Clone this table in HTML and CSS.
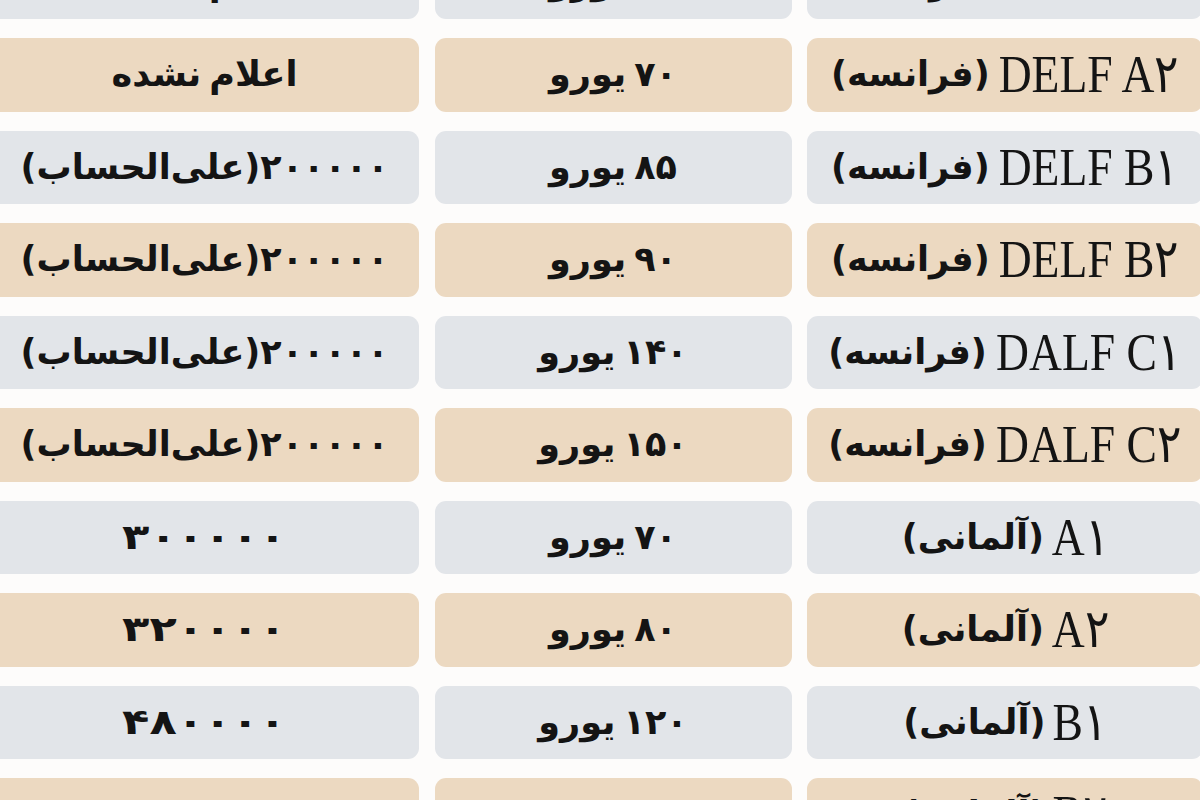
FILE: index.html
```html
<!DOCTYPE html>
<html lang="fa">
<head>
<meta charset="utf-8">
<title>هزینه آزمون‌ها</title>
<link rel="stylesheet" href="styles.css">
</head>
<body>
<div class="table">
  <div class="cell gray"><span class="lat">DELF A۱</span><span class="fa">(فرانسه)</span></div>
  <div class="cell gray"><span class="fa">۶۰ یورو</span></div>
  <div class="cell gray"><span class="fa">اعلام نشده</span></div>

  <div class="cell beige"><span class="lat">DELF A۲</span><span class="fa">(فرانسه)</span></div>
  <div class="cell beige"><span class="fa">۷۰ یورو</span></div>
  <div class="cell beige"><span class="fa">اعلام نشده</span></div>

  <div class="cell gray"><span class="lat">DELF B۱</span><span class="fa">(فرانسه)</span></div>
  <div class="cell gray"><span class="fa">۸۵ یورو</span></div>
  <div class="cell gray"><span class="fa">۲۰۰۰۰۰(علی‌الحساب)</span></div>

  <div class="cell beige"><span class="lat">DELF B۲</span><span class="fa">(فرانسه)</span></div>
  <div class="cell beige"><span class="fa">۹۰ یورو</span></div>
  <div class="cell beige"><span class="fa">۲۰۰۰۰۰(علی‌الحساب)</span></div>

  <div class="cell gray"><span class="lat">DALF C۱</span><span class="fa">(فرانسه)</span></div>
  <div class="cell gray"><span class="fa">۱۴۰ یورو</span></div>
  <div class="cell gray"><span class="fa">۲۰۰۰۰۰(علی‌الحساب)</span></div>

  <div class="cell beige"><span class="lat">DALF C۲</span><span class="fa">(فرانسه)</span></div>
  <div class="cell beige"><span class="fa">۱۵۰ یورو</span></div>
  <div class="cell beige"><span class="fa">۲۰۰۰۰۰(علی‌الحساب)</span></div>

  <div class="cell gray"><span class="lat short">A۱</span><span class="fa">(آلمانی)</span></div>
  <div class="cell gray"><span class="fa">۷۰ یورو</span></div>
  <div class="cell gray"><span class="fa num">۳۰۰۰۰۰</span></div>

  <div class="cell beige"><span class="lat short">A۲</span><span class="fa">(آلمانی)</span></div>
  <div class="cell beige"><span class="fa">۸۰ یورو</span></div>
  <div class="cell beige"><span class="fa num">۳۲۰۰۰۰</span></div>

  <div class="cell gray"><span class="lat short">B۱</span><span class="fa">(آلمانی)</span></div>
  <div class="cell gray"><span class="fa">۱۲۰ یورو</span></div>
  <div class="cell gray"><span class="fa num">۴۸۰۰۰۰</span></div>

  <div class="cell beige"><span class="lat short">B۲</span><span class="fa">(آلمانی)</span></div>
  <div class="cell beige"><span class="fa">۱۵۰ یورو</span></div>
  <div class="cell beige"><span class="fa num">۴۸۰۰۰۰</span></div>
</div>
</body>
</html>
```

FILE: styles.css
```css
html, body {
  margin: 0;
  padding: 0;
  background: #fdfcfb;
  overflow: hidden;
}

body {
  width: 1200px;
  height: 800px;
  font-family: "DejaVu Sans", sans-serif;
  color: #141414;
}

.table {
  direction: rtl;
  display: grid;
  grid-template-columns: 396px 357px 429px;
  grid-auto-rows: 73.5px;
  column-gap: 15.5px;
  row-gap: 19px;
  width: 1213px;
  margin-left: -10px;
  margin-top: -54.5px;
}

.cell {
  display: flex;
  align-items: center;
  justify-content: center;
  gap: 8px;
  border-radius: 11px;
  white-space: nowrap;
  overflow: hidden;
}

.gray {
  background: #e2e5e9;
}

.beige {
  background: #ecd9c1;
}

.fa {
  font-family: "DejaVu Sans", sans-serif;
  font-weight: bold;
  font-size: 35px;
  line-height: 1;
  word-spacing: -4px;
}

.num {
  display: inline-block;
  transform: scaleX(1.28);
}

.lat {
  display: inline-block;
  direction: ltr;
  font-family: "Liberation Serif", "DejaVu Serif", serif;
  font-weight: normal;
  font-size: 53px;
  line-height: 1;
  transform: scaleX(0.86);
  margin: 0 -14px;
}

.lat.short {
  margin: 0 -5px;
}
```
